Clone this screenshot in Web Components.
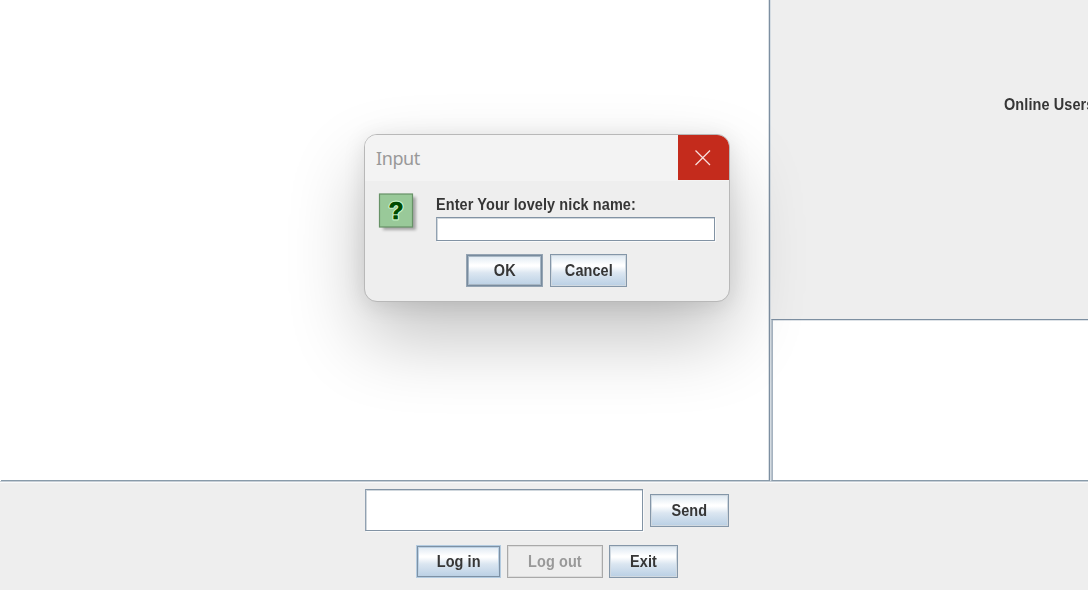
<!DOCTYPE html>
<html lang="en"><head><meta charset="utf-8"><title>Chat</title>
<style>html,body{margin:0;width:1088px;height:590px;overflow:hidden;background:#eee}</style></head>
<body><chat-window></chat-window>
<script>
const define=(name,html)=>{
  const t=document.createElement('template');t.innerHTML=html;
  customElements.define(name,class extends HTMLElement{
    constructor(){super();this.attachShadow({mode:'open'}).append(t.content.cloneNode(true));}
  });
};
define('metal-label',`<style>
:host{display:block;font:bold 15.6px/20px "Liberation Sans",Arial,sans-serif;letter-spacing:.1px;white-space:nowrap;transform:scaleX(.928);transform-origin:var(--origin,0 50%)}
</style><slot></slot>`);
define('metal-button',`<style>
:host{--origin:50% 50%;display:flex;box-sizing:border-box;align-items:center;justify-content:center;padding-top:1px;border:1px solid #8496a8;box-shadow:inset 0 0 0 1px #d0d9e1;background:linear-gradient(#dce7f1 0,#fff 32%,#fff 36%,#dbe6f1 58%,#b9cfe4 100%);color:#363636;white-space:nowrap}
:host([default]){border-color:#95a4b3;box-shadow:inset 0 0 0 1px #788b9e,inset 0 0 0 2px #a7b6c4}
:host([focused]){border-color:#b3cbe0;box-shadow:inset 0 0 0 1px #7d91a5,inset 0 0 0 2px #bdd2e5}
:host([disabled]){background:#eee;border-color:#a9a9a9;box-shadow:inset 0 0 0 1px #ddd;color:#999}
</style><metal-label><slot></slot></metal-label>`);
define('metal-field',`<style>
:host{display:block;box-sizing:border-box;background:#fff;border:1px solid #8293a4;border-left-color:#91a1b1;box-shadow:inset 1px 1px 0 #d0d7dd,1px 1px 0 #fafafa}
</style><slot></slot>`);
define('question-icon',`<style>:host{display:block;width:42px;height:42px}svg{display:block;overflow:visible}
text{font:bold 24px "Liberation Sans",Arial,sans-serif}</style>
<svg width="42" height="42"><defs><filter id="b" x="-30%" y="-30%" width="160%" height="160%"><feGaussianBlur stdDeviation="1.7"/></filter></defs>
<rect x="4" y="4" width="33" height="33" fill="#777" opacity=".6" filter="url(#b)"/>
<rect x=".5" y="1" width="33" height="33" fill="#99c999" stroke="#679267" stroke-width="1.2"/>
<g text-anchor="middle"><text x="17" y="26" stroke="#c4f0c4" stroke-width="3.2" stroke-linejoin="round" fill="#004b00" paint-order="stroke">?</text><text x="17" y="26" fill="#004b00" stroke="#004b00" stroke-width=".7" aria-hidden="true">?</text></g></svg>`);
define('close-button',`<style>:host{display:flex;align-items:center;justify-content:center;width:51.5px;height:45px;background:#c42b1c}</style>
<svg width="18" height="18" viewBox="0 0 18 18"><path d="M1.5 1.5 16 16M16 1.5 1.5 16" stroke="#f8dedb" stroke-width="1.3" fill="none"/></svg>`);
define('input-dialog',`<style>
:host{display:block;box-sizing:border-box;width:366px;height:168px;border:1px solid #b8b8b8;border-radius:13px;background:#eee;overflow:hidden;box-shadow:0 36px 76px rgba(0,0,0,.24),0 3px 22px rgba(0,0,0,.10);background-clip:padding-box}
header{display:flex;justify-content:space-between;height:46px;background:#f3f3f3;font:18px "Noto Sans",sans-serif;letter-spacing:-.4px;color:#999}
header span{padding:10px 0 0 11px;line-height:27px}
main{display:grid;grid-template-columns:57px 279px;grid-template-rows:47px;padding:13px 0 0 14px}
.fields{display:grid;grid-template-rows:23px 24px}
metal-label{margin-top:1px}
footer{display:flex;gap:7px;padding:13px 0 0 101px}
question-icon{margin-top:-1px}
metal-button{width:77px;height:33px}
</style><header><span>Input</span><close-button></close-button></header>
<main><question-icon></question-icon><div class="fields"><metal-label>Enter Your lovely nick name:</metal-label><metal-field></metal-field></div></main>
<footer><metal-button default>OK</metal-button><metal-button>Cancel</metal-button></footer>`);
define('chat-window',`<style>
:host{display:grid;position:relative;grid-template:481px 109px/771px 317px;width:1088px;height:590px;background:#eee;color:#363636;overflow:hidden}
.log{box-sizing:border-box;margin:0 1px 0 1px;background:#fff;border-right:1px solid #7d8fa1;border-bottom:1px solid #899baa;box-shadow:-1px 0 #fff,inset -1px 0 #dbe1e6,1px 0 #d5dce2,0 1px #c5cdd5,0 2px #f8f8f8}
.side{display:grid;grid-template-rows:319px 162px;overflow:hidden}
.title{padding:95px 0 0 233px}
.users{background:#fff;border-top:1px solid #7d8fa1;border-left:1px solid #b9c3cd;border-bottom:1px solid #899baa;box-sizing:border-box;box-shadow:inset 1px 0 #a6b3c0,inset 0 1px #dde2e7}
.controls{grid-column:1/3;display:grid;grid-template-rows:56px 45px;border-top:1px solid #c5cdd5;box-shadow:inset 0 1px #f9f9f9}
.send{display:flex;padding:7px 0 0 365px;gap:7px}
.send metal-field{width:278px;height:42px}.send metal-button{width:79px;height:33px;margin-top:5px}
.actions{display:flex;gap:6px;padding:7px 0 0 416px}.actions metal-button{height:33px}
input-dialog{position:absolute;left:364px;top:134px}
</style><div class="log"></div>
<div class="side"><div class="title"><metal-label>Online Users</metal-label></div><div class="users"></div></div>
<div class="controls"><div class="send"><metal-field></metal-field><metal-button>Send</metal-button></div>
<div class="actions"><metal-button focused style="width:85px">Log in</metal-button><metal-button disabled style="width:96px">Log out</metal-button><metal-button style="width:69px">Exit</metal-button></div></div>
<input-dialog></input-dialog>`);
</script></body></html>
